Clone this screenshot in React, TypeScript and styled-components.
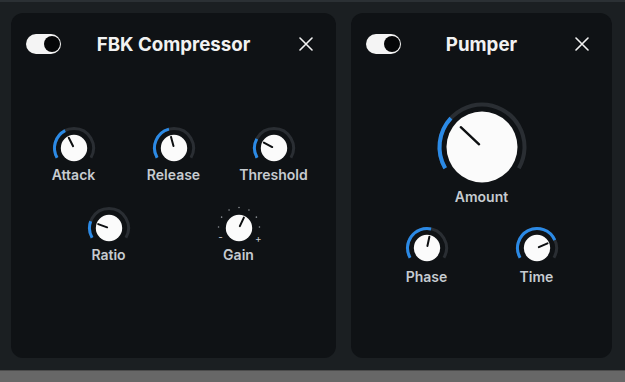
import React from "react";
import styled, { createGlobalStyle } from "styled-components";

const Global = createGlobalStyle`
  html, body { margin: 0; padding: 0; background: #1b1f22; }
  body { font-family: Inter, "Noto Sans", sans-serif; }
`;

const Screen = styled.div`
  width: 625px;
  height: 382px;
  display: flex;
  flex-direction: column;
  overflow: hidden;
`;

const Workspace = styled.div`
  height: 370px;
  box-sizing: border-box;
  background: #1b1f22;
  border-top: 2px solid #2b3034;
  padding: 11px 13px 12px 11px;
  display: grid;
  grid-template-columns: 325px 261px;
  column-gap: 15px;
`;

const StatusBar = styled.div`
  flex: 1;
  background: #676767;
  border-top: 1px solid #4b4b4b;
`;

const Panel = styled.section`
  background: #0f1215;
  border-radius: 12px;
  padding: 19px 15px 0 15px;
  display: flex;
  flex-direction: column;
`;

const Header = styled.div`
  height: 20px;
  display: grid;
  grid-template-columns: 1fr auto 1fr;
  align-items: center;
`;

const Toggle = styled.div`
  width: 35px;
  height: 20px;
  border-radius: 10px;
  background: #f4f4f4;
  display: flex;
  align-items: center;
  justify-content: flex-end;
  padding: 0 1px;
  box-sizing: border-box;
  &::after {
    content: "";
    width: 16px;
    height: 16px;
    border-radius: 50%;
    background: #050607;
  }
`;

const Title = styled.h2`
  margin: 0;
  font-size: 18.7px;
  font-weight: 700;
  color: #f2f2f2;
  letter-spacing: 0;
  line-height: 22px;
  padding-top: 2px;
`;

const CloseButton = styled.button`
  justify-self: end;
  margin-right: 8px;
  width: 14px;
  height: 14px;
  padding: 0;
  border: none;
  background: transparent;
  display: flex;
  align-items: center;
  justify-content: center;
`;

const KnobGrid = styled.div<{ $cols: number; $colW: number; $mt: number }>`
  display: grid;
  grid-template-columns: repeat(${(p) => p.$cols}, ${(p) => p.$colW}px);
  justify-content: center;
  margin-top: ${(p) => p.$mt}px;
`;

const KnobCell = styled.div`
  display: flex;
  flex-direction: column;
  align-items: center;
`;

const KnobLabel = styled.span<{ $mt: number }>`
  margin-top: ${(p) => p.$mt}px;
  font-size: 14px;
  font-weight: 600;
  line-height: 16px;
  color: #c6cbd0;
`;

const polar = (cx: number, cy: number, r: number, a: number) => {
  const rad = (a * Math.PI) / 180;
  return [cx + r * Math.sin(rad), cy - r * Math.cos(rad)];
};

const arcPath = (cx: number, cy: number, r: number, a1: number, a2: number) => {
  const [x1, y1] = polar(cx, cy, r, a1);
  const [x2, y2] = polar(cx, cy, r, a2);
  const large = a2 - a1 > 180 ? 1 : 0;
  return `M${x1.toFixed(2)} ${y1.toFixed(2)} A${r} ${r} 0 ${large} 1 ${x2.toFixed(2)} ${y2.toFixed(2)}`;
};

type KnobProps = {
  label: string;
  value: number;
  big?: boolean;
  dial?: boolean;
  labelGap?: number;
};

const Knob: React.FC<KnobProps> = ({ label, value, big, dial, labelGap = 2 }) => {
  const W = big ? 92 : 46;
  const H = big ? 86 : 40;
  const c = W / 2;
  const r = big ? 42.5 : 19.5;
  const sw = big ? 4 : 3;
  const kr = big ? 35.5 : 13.2;
  const p1 = big ? 4 : 2;
  const p2 = big ? 29 : 11.5;
  const [px1, py1] = polar(c, c, p1, value);
  const [px2, py2] = polar(c, c, p2, value);
  const start = -120;
  const end = 120;
  return (
    <KnobCell>
      <svg width={W} height={H} viewBox={`0 0 ${W} ${H}`}>
        {dial ? (
          <>
            {[-87, -58, -29, 0, 29, 58, 87].map((a) => {
              const [x, y] = polar(c, c, 20.5, a);
              return <circle key={a} cx={x} cy={y} r={0.8} fill="#8b9095" />;
            })}
            <text x={polar(c, c, 21, -119)[0]} y={polar(c, c, 21, -119)[1] + 3} fontSize="10" fill="#c6cbd0" textAnchor="middle" fontFamily="Inter, sans-serif">-</text>
            <text x={polar(c, c, 22, 118)[0]} y={polar(c, c, 22, 118)[1] + 3.5} fontSize="10" fill="#c6cbd0" textAnchor="middle" fontFamily="Inter, sans-serif">+</text>
          </>
        ) : (
          <>
            <path d={arcPath(c, c, r, start, end)} fill="none" stroke="#2a2e33" strokeWidth={sw} />
            <path d={arcPath(c, c, r, start, value)} fill="none" stroke="#2b8ae6" strokeWidth={sw} />
          </>
        )}
        <circle cx={c} cy={c} r={kr} fill="#fbfbfb" />
        <line x1={px1} y1={py1} x2={px2} y2={py2} stroke="#0d0f11" strokeWidth={big ? 2.4 : 2} strokeLinecap="round" />
      </svg>
      <KnobLabel $mt={labelGap}>{label}</KnobLabel>
    </KnobCell>
  );
};

const CloseIcon = () => (
  <svg width="14" height="14" viewBox="0 0 14 14">
    <path d="M1 1 L13 13 M13 1 L1 13" stroke="#f2f2f2" strokeWidth="1.6" strokeLinecap="round" />
  </svg>
);

const PanelHeader: React.FC<{ title: string }> = ({ title }) => (
  <Header>
    <Toggle />
    <Title>{title}</Title>
    <CloseButton aria-label="Close">
      <CloseIcon />
    </CloseButton>
  </Header>
);

export default function App() {
  return (
    <Screen>
      <Global />
      <Workspace>
        <Panel>
          <PanelHeader title="FBK Compressor" />
          <KnobGrid $cols={3} $colW={100} $mt={73}>
            <Knob label="Attack" value={-27} />
            <Knob label="Release" value={-15} />
            <Knob label="Threshold" value={-62} />
          </KnobGrid>
          <KnobGrid $cols={2} $colW={130} $mt={22}>
            <Knob label="Ratio" value={-70} />
            <Knob label="Gain" value={25} dial />
          </KnobGrid>
        </Panel>
        <Panel>
          <PanelHeader title="Pumper" />
          <KnobGrid $cols={1} $colW={120} $mt={49}>
            <Knob label="Amount" value={-47} big />
          </KnobGrid>
          <KnobGrid $cols={2} $colW={110} $mt={20}>
            <Knob label="Phase" value={12} labelGap={4} />
            <Knob label="Time" value={66} labelGap={4} />
          </KnobGrid>
        </Panel>
      </Workspace>
      <StatusBar />
    </Screen>
  );
}
